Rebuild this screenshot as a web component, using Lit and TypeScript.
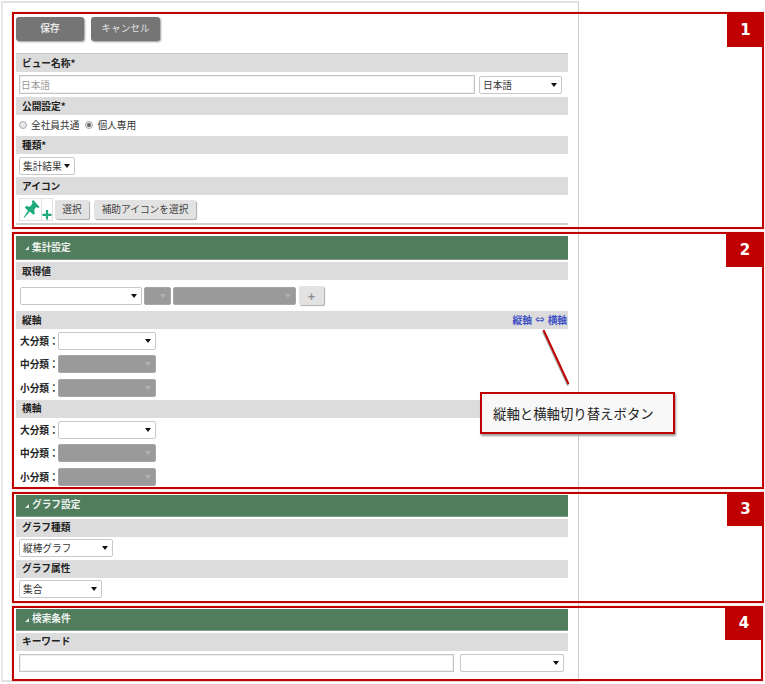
import { LitElement, html, css, nothing } from "lit";
import { customElement } from "lit/decorators.js";

const boxes = [
  { n: "1", l: 12, t: 12, w: 752, h: 217, bw: 37, bh: 35 },
  { n: "2", l: 12, t: 232, w: 752, h: 257, bw: 38, bh: 35 },
  { n: "3", l: 12, t: 492, w: 752, h: 111, bw: 37, bh: 34 },
  { n: "4", l: 12, t: 606, w: 751, h: 75, bw: 38, bh: 34 },
];

@customElement("app-root")
export class AppRoot extends LitElement {
  static styles = css`
    :host {
      display: block;
      position: relative;
      width: 765px;
      height: 684px;
      overflow: hidden;
      background: #fff;
      font-family: "Noto Sans CJK JP", "Liberation Sans", sans-serif;
      font-size: 9.7px;
      color: #333;
    }
    .screen {
      box-sizing: border-box;
      width: 578px;
      height: 681px;
      margin-left: 1px;
      margin-top: 1px;
      border: 1px solid #ccc;
      border-top: 2px solid #e2e2e2;
      border-left: 2px solid #e8e8e8;
      border-bottom: 2px solid #e2e2e2;
      padding: 14px 10px 0 13px;
    }
    .actions { display: flex; gap: 7px; height: 24px; margin-bottom: 12px; }
    .primary {
      box-sizing: border-box;
      width: 68px;
      height: 24px;
      padding-bottom: 2px;
      background: #757575;
      color: #e4e4e4;
      border-radius: 3px;
      box-shadow: 1px 1px 2px #999;
      display: flex;
      align-items: center;
      justify-content: center;
    }
    .primary.strong { font-weight: 700; }
    .primary.wide { width: 69px; }
    .bar {
      box-sizing: border-box;
      height: 18px;
      padding: 0 1px 1px 6px;
      background: #dcdcdc;
      display: flex;
      align-items: center;
      justify-content: space-between;
      font-weight: 700;
      color: #222;
    }
    .bar.first { height: 19px; border-top: 1px solid #c8c8c8; }
    .bar.gap { margin-top: 2px; }
    .link {
      display: flex;
      align-items: center;
      gap: 3px;
      color: #3e50c4;
      font-weight: 700;
      margin-top: 1px;
    }
    .swap { font-size: 11.5px; line-height: 1; font-family: "DejaVu Sans", sans-serif; font-weight: 400; }
    .head {
      height: 24px;
      background: #4f7d5e;
      border-bottom: 1px solid #7f9a88;
      box-sizing: border-box;
      display: flex;
      align-items: center;
      gap: 3px;
      padding: 0 0 2px 9px;
      color: #eef3ef;
      font-weight: 700;
    }
    .head.short { height: 22px; }
    .tri {
      width: 0;
      height: 0;
      border-left: 4px solid transparent;
      border-bottom: 4px solid #dfe8e2;
      margin-top: 3px;
    }
    .sec2 { margin-top: 11px; }
    .sec3 { margin-top: 6px; }
    .sec4 { margin-top: 8px; }
    .row { display: flex; align-items: center; padding-left: 3px; box-sizing: border-box; }
    .h25 { height: 25px; }
    .h21 { height: 21px; padding-bottom: 2px; }
    .h23 { height: 23px; }
    .h24 { height: 24px; }
    .h28 { height: 28px; }
    .h31 { height: 31px; }
    .axis { height: 23.67px; }
    .line { height: 2px; background: #cfcfcf; }
    .input {
      box-sizing: border-box;
      height: 19px;
      width: 456px;
      font: inherit;
      color: #333;
      border: 1px solid #c4c4c4;
      box-shadow: inset 0 0 0 1px #f0f0f0;
      padding: 0 1px;
      background: #fff;
    }
    .input::placeholder { color: #9a9a9a; }
    .input.kw { width: 435px; height: 18px; }
    .sel {
      box-sizing: border-box;
      height: 18px;
      border: 1px solid #c8c8c8;
      border-radius: 2px;
      background: #fff;
      display: flex;
      align-items: center;
      padding: 0 4px 0 3px;
      color: #333;
      flex: none;
    }
    .sel::after {
      content: "";
      margin-left: auto;
      border-left: 3px solid transparent;
      border-right: 3px solid transparent;
      border-top: 4px solid #111;
    }
    .sel.off { background: #9a9a9a; border-color: #a6a6a6; }
    .sel.off::after { border-top-color: #b2b2b2; }
    .w56 { width: 56px; }
    .w83 { width: 83px; }
    .w94 { width: 94px; }
    .w98 { width: 98px; }
    .w104 { width: 104px; }
    .w122 { width: 122px; margin-left: 1px; }
    .w27 { width: 27px; margin-left: 2px; }
    .w123 { width: 123px; margin-left: 2px; }
    .ml4 { margin-left: 4px; }
    .ml6 { margin-left: 6px; }
    .radio {
      box-sizing: border-box;
      width: 8px;
      height: 8px;
      border-radius: 50%;
      border: 1px solid #aaa;
      background: #e8e8e8;
      margin-right: 4px;
      display: flex;
      align-items: center;
      justify-content: center;
    }
    .radio.on::after {
      content: "";
      width: 4px;
      height: 4px;
      border-radius: 50%;
      background: #666;
    }
    .radio.second { margin-left: 6px; }
    .icon {
      box-sizing: border-box;
      width: 23px;
      height: 23px;
      border: 1px solid #e2e2e2;
      display: block;
      flex: none;
    }
    .icon-plus {
      box-sizing: border-box;
      width: 11px;
      height: 23px;
      border: 1px solid #e2e2e2;
      border-left: none;
      display: block;
      flex: none;
    }
    .btn {
      height: 19px;
      display: flex;
      align-items: center;
      justify-content: center;
      background: #e2e2e2;
      border-radius: 2px;
      box-shadow: 1px 1px 1px #aaa;
      color: #444;
      flex: none;
    }
    .b34 { width: 34px; margin-left: 2px; }
    .b102 { width: 102px; margin-left: 5px; }
    .plus { width: 25px; margin-left: 3px; font-size: 12px; font-weight: 700; color: #8a8a8a; }
    .lab { width: 38px; margin-left: 1px; font-weight: 700; color: #222; flex: none; white-space: nowrap; }
    .overlay { position: absolute; box-sizing: border-box; border: 2px solid #c00000; pointer-events: none; box-shadow: 0 0 1px #e88; }
    .badge {
      position: absolute;
      top: -2px;
      right: -2px;
      background: #c00000;
      color: #fff;
      font-family: "DejaVu Sans", sans-serif;
      font-weight: 700;
      font-size: 15px;
      display: flex;
      align-items: center;
      justify-content: center;
    }
    .callout {
      position: absolute;
      left: 480px;
      top: 392px;
      box-sizing: border-box;
      width: 195px;
      height: 42px;
      border: 2px solid #c00000;
      background: #f8f8f8;
      box-shadow: 1px 2px 2px #999;
      display: flex;
      align-items: center;
      padding-left: 11px;
      font-size: 13.4px;
      font-weight: 400;
      color: #222;
    }
    .pointer { position: absolute; left: 540px; top: 326px; width: 32px; height: 62px; overflow: visible; }
  `;

  private bar(t: string, cls = "gap", extra: unknown = nothing) {
    return html`<div class="bar ${cls}"><span>${t}</span>${extra}</div>`;
  }
  private head(t: string, cls: string) {
    return html`<div class="head ${cls}"><span class="tri"></span><span>${t}</span></div>`;
  }
  private axisRow(t: string, off: boolean) {
    return html`<div class="row axis"><span class="lab">${t}</span><div class="sel w98 ${off ? "off" : ""}"></div></div>`;
  }

  render() {
    return html`
      <div class="screen">
        <div class="actions">
          <div class="primary strong">保存</div>
          <div class="primary wide">キャンセル</div>
        </div>

        <div class="bar first"><span>ビュー名称*</span></div>
        <div class="row h25">
          <input class="input" placeholder="日本語" />
          <div class="sel w83 ml4">日本語</div>
        </div>
        <div class="bar"><span>公開設定*</span></div>
        <div class="row h21">
          <span class="radio"></span><span>全社員共通</span>
          <span class="radio on second"></span><span>個人専用</span>
        </div>
        <div class="bar"><span>種類*</span></div>
        <div class="row h23"><div class="sel w56">集計結果</div></div>
        <div class="bar"><span>アイコン</span></div>
        <div class="row h28">
          <svg class="icon" viewBox="0 0 23 23">
            <path fill="#1eaa7a" d="M14.5 1 L21.5 8.8 L19.6 9.8 L18 8.8 L15.6 11.6 L16.2 16 L14.6 17.2 L10.8 13.6 L4.8 20.4 L4.2 19.8 L8.8 12.8 L5.2 9.2 L6.8 7.8 L10.8 8.4 L13.6 5.2 L13 2.6 Z" />
          </svg>
          <svg class="icon-plus" viewBox="0 0 11 23">
            <path fill="none" stroke="#1eaa7a" stroke-width="2.4" d="M5.5 12 V22.5 M0.5 17.4 H10.5" />
          </svg>
          <div class="btn b34">選択</div>
          <div class="btn b102">補助アイコンを選択</div>
        </div>
        <div class="line"></div>

        <div class="sec2">
          ${this.head("集計設定", "")}
          ${this.bar("取得値")}
          <div class="row h31">
            <div class="sel w122"></div>
            <div class="sel off w27"></div>
            <div class="sel off w123"></div>
            <div class="btn plus">+</div>
          </div>
          ${this.bar("縦軸", "", html`<span class="link"><span>縦軸</span><span class="swap">⇔</span><span>横軸</span></span>`)}
          ${this.axisRow("大分類：", false)}
          ${this.axisRow("中分類：", true)}
          ${this.axisRow("小分類：", true)}
          ${this.bar("横軸", "")}
          ${this.axisRow("大分類：", false)}
          ${this.axisRow("中分類：", true)}
          ${this.axisRow("小分類：", true)}
        </div>

        <div class="sec3">
          ${this.head("グラフ設定", "short")}
          ${this.bar("グラフ種類")}
          <div class="row h23"><div class="sel w94">縦棒グラフ</div></div>
          ${this.bar("グラフ属性", "")}
          <div class="row h23"><div class="sel w83">集合</div></div>
        </div>

        <div class="sec4">
          ${this.head("検索条件", "short")}
          ${this.bar("キーワード")}
          <div class="row h24">
            <input class="input kw" />
            <div class="sel w104 ml6"></div>
          </div>
        </div>
      </div>

      ${boxes.map(
        (b) => html`<div class="overlay" style="left:${b.l}px;top:${b.t}px;width:${b.w}px;height:${b.h}px">
          <div class="badge" style="width:${b.bw}px;height:${b.bh}px">${b.n}</div>
        </div>`
      )}

      <svg class="pointer" viewBox="0 0 32 62">
        <line x1="3.5" y1="4" x2="28.5" y2="58" stroke="#aaa" stroke-width="2" transform="translate(-0.5 1.5)" />
        <line x1="3.5" y1="4" x2="28.5" y2="58" stroke="#c00000" stroke-width="2" />
      </svg>
      <div class="callout">縦軸と横軸切り替えボタン</div>
    `;
  }
}
